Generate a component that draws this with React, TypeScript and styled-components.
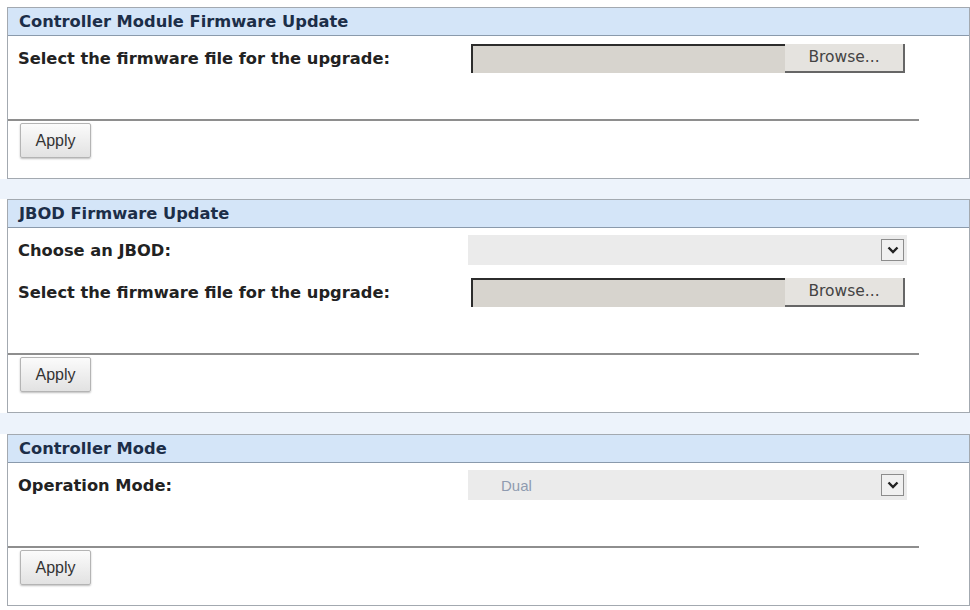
import React from "react";
import styled, { createGlobalStyle } from "styled-components";

const GlobalStyle = createGlobalStyle`
  html, body {
    margin: 0;
    padding: 0;
    background: #ffffff;
  }
  body {
    font-family: "DejaVu Sans", Verdana, sans-serif;
    color: #222;
  }
`;

const Page = styled.div`
  width: 970px;
  padding-top: 7px;
`;

const Panel = styled.section`
  margin-left: 7px;
  width: 961px;
  border: 1px solid #a3a9b0;
  background: #ffffff;
`;

const Header = styled.div`
  height: 27px;
  display: flex;
  align-items: center;
  padding-left: 11px;
  background: #d4e5f8;
  border-bottom: 1px solid #8a9aac;
  font-weight: bold;
  font-size: 16.3px;
  color: #1c2e48;
  white-space: nowrap;
`;

const Body = styled.div`
  display: flex;
  flex-direction: column;
  gap: 12px;
  padding: 7px 0 0 10px;
`;

const FieldRow = styled.div`
  display: grid;
  grid-template-columns: 450px 440px;
  align-items: center;
  height: 30px;
`;

const Label = styled.label`
  font-weight: bold;
  font-size: 16.3px;
  color: #222;
  white-space: nowrap;
`;

const FileControl = styled.div<{ $inset: number }>`
  display: flex;
  height: 29px;
  margin-left: ${(p) => p.$inset}px;
  width: 434px;
`;

const FileBox = styled.div`
  flex: 1;
  background: #d7d4ce;
  border-top: 2px solid #2c2c2c;
  border-left: 2px solid #2c2c2c;
`;

const BrowseButton = styled.button`
  width: 120px;
  height: 29px;
  margin: 0;
  padding: 0;
  background: #e5e3df;
  border: none;
  border-right: 2px solid #666;
  border-bottom: 2px solid #666;
  font-family: "DejaVu Sans", Verdana, sans-serif;
  font-size: 15.5px;
  color: #444;
`;

const Select = styled.div`
  display: flex;
  align-items: center;
  justify-content: space-between;
  width: 439px;
  height: 30px;
  padding: 0 3px 0 33px;
  box-sizing: border-box;
  background: #ebebeb;
  font-family: "Liberation Sans", Arial, sans-serif;
  font-size: 15px;
  color: #8f9bb0;
`;

const ArrowBox = styled.div`
  width: 23px;
  height: 22px;
  display: flex;
  align-items: center;
  justify-content: center;
  background: #f0f0f0;
  border: 1px solid #8c8c8c;
  box-sizing: border-box;
`;

const Spacer = styled.div`
  height: 46px;
`;

const Separator = styled.hr`
  margin: 0;
  width: 911px;
  border: none;
  border-top: 2px solid #8e8e8e;
`;

const Footer = styled.div`
  padding: 2px 0 20px 12px;
`;

const ApplyButton = styled.button`
  width: 71px;
  height: 35px;
  border: 1px solid #b4b4b4;
  border-radius: 2px;
  background: linear-gradient(#fbfbfb, #e2e2e2);
  box-shadow: 0 1px 2px rgba(0, 0, 0, 0.25);
  font-family: "Liberation Sans", Arial, sans-serif;
  font-size: 16px;
  color: #333;
`;

const Gap = styled.div<{ $h: number }>`
  height: ${(p) => p.$h}px;
  background: #edf3fb;
`;

function Chevron() {
  return (
    <svg width="12" height="8" viewBox="0 0 12 8">
      <path d="M1.5 1.5 L6 6 L10.5 1.5" fill="none" stroke="#222" strokeWidth="2.4" />
    </svg>
  );
}

function FileInput() {
  return (
    <FileControl $inset={3}>
      <FileBox />
      <BrowseButton>Browse...</BrowseButton>
    </FileControl>
  );
}

function Dropdown({ value }: { value?: string }) {
  return (
    <Select>
      <span>{value}</span>
      <ArrowBox>
        <Chevron />
      </ArrowBox>
    </Select>
  );
}

function Section({ title, children }: { title: string; children: React.ReactNode }) {
  return (
    <Panel>
      <Header>{title}</Header>
      <Body>{children}</Body>
      <Spacer />
      <Separator />
      <Footer>
        <ApplyButton>Apply</ApplyButton>
      </Footer>
    </Panel>
  );
}

export default function App() {
  return (
    <>
      <GlobalStyle />
      <Page>
        <Section title="Controller Module Firmware Update">
          <FieldRow>
            <Label>Select the firmware file for the upgrade:</Label>
            <FileInput />
          </FieldRow>
        </Section>
        <Gap $h={20} />
        <Section title="JBOD Firmware Update">
          <FieldRow>
            <Label>Choose an JBOD:</Label>
            <Dropdown />
          </FieldRow>
          <FieldRow>
            <Label>Select the firmware file for the upgrade:</Label>
            <FileInput />
          </FieldRow>
        </Section>
        <Gap $h={21} />
        <Section title="Controller Mode">
          <FieldRow>
            <Label>Operation Mode:</Label>
            <Dropdown value="Dual" />
          </FieldRow>
        </Section>
      </Page>
    </>
  );
}
